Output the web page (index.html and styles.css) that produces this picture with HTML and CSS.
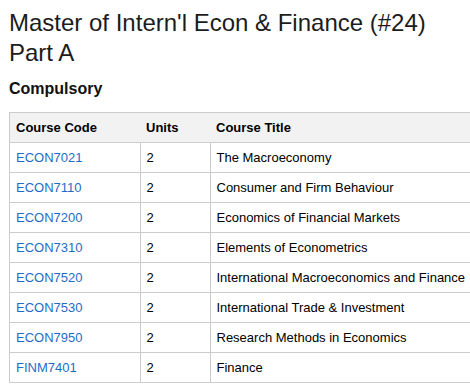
FILE: index.html
```html
<!DOCTYPE html>
<html lang="en">
<head>
<meta charset="utf-8">
<title>Master of Intern'l Econ &amp; Finance (#24)</title>
<link rel="stylesheet" href="styles.css">
</head>
<body>
<main class="page">
  <h1 class="program-title">Master of Intern'l Econ &amp; Finance (#24)<br>Part A</h1>
  <h2 class="section-title">Compulsory</h2>
  <table class="courses">
    <thead>
      <tr>
        <th class="col-code">Course Code</th>
        <th class="col-units">Units</th>
        <th class="col-title">Course Title</th>
      </tr>
    </thead>
    <tbody>
      <tr><td><a href="#">ECON7021</a></td><td>2</td><td>The Macroeconomy</td></tr>
      <tr><td><a href="#">ECON7110</a></td><td>2</td><td>Consumer and Firm Behaviour</td></tr>
      <tr><td><a href="#">ECON7200</a></td><td>2</td><td>Economics of Financial Markets</td></tr>
      <tr><td><a href="#">ECON7310</a></td><td>2</td><td>Elements of Econometrics</td></tr>
      <tr><td><a href="#">ECON7520</a></td><td>2</td><td>International Macroeconomics and Finance</td></tr>
      <tr><td><a href="#">ECON7530</a></td><td>2</td><td>International Trade &amp; Investment</td></tr>
      <tr><td><a href="#">ECON7950</a></td><td>2</td><td>Research Methods in Economics</td></tr>
      <tr><td><a href="#">FINM7401</a></td><td>2</td><td>Finance</td></tr>
    </tbody>
  </table>
</main>
</body>
</html>
```
FILE: styles.css
```css
html, body {
  margin: 0;
  padding: 0;
  background: #ffffff;
  overflow: hidden;
}

body {
  font-family: "Liberation Sans", Arial, sans-serif;
  color: #000;
}

.page {
  padding: 8px 0 0 9px;
}

.program-title {
  margin: 0;
  font-size: 24px;
  font-weight: normal;
  line-height: 30px;
  color: #1c1c1c;
}

.section-title {
  margin: 12px 0 14px;
  font-size: 16px;
  font-weight: bold;
  line-height: 18px;
  color: #111;
}

.courses {
  border-collapse: collapse;
  width: 560px;
  font-size: 13px;
  line-height: 15px;
  table-layout: fixed;
}

.courses th,
.courses td {
  padding: 7px 6px;
  text-align: left;
  vertical-align: middle;
  border: 1px solid #cccccc;
}

.courses th {
  background: #f2f2f2;
  font-weight: bold;
  border-left: none;
  border-right: none;
}

.courses th:first-child {
  border-left: 1px solid #cccccc;
}

.col-code { width: 118px; }
.col-units { width: 58px; }

.courses a {
  color: #1f6cc6;
  text-decoration: none;
}
```
